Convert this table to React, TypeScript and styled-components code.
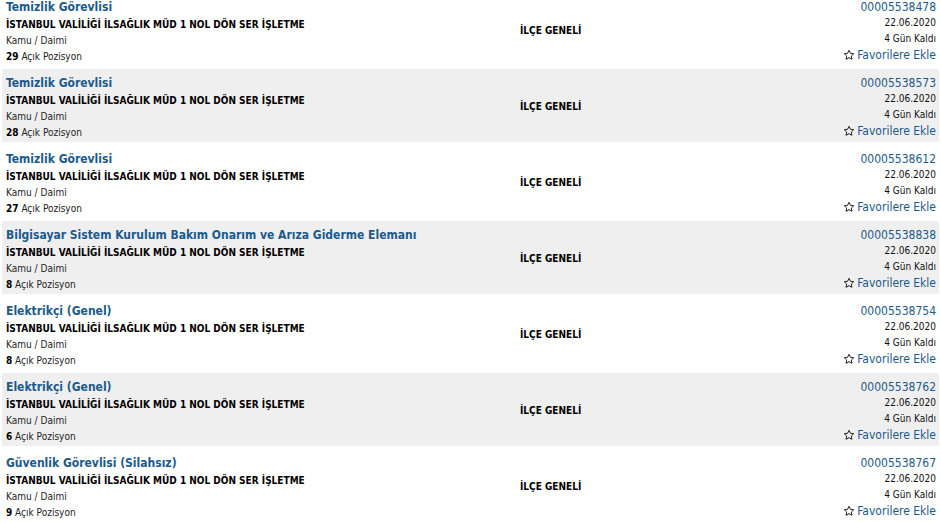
import React from "react";
import styled, { createGlobalStyle } from "styled-components";

interface Ilan {
  title: string;
  company: string;
  kind: string;
  count: number;
  location: string;
  no: string;
  date: string;
  left: string;
}

const COMPANY = "İSTANBUL VALİLİĞİ İLSAĞLIK MÜD 1 NOL DÖN SER İŞLETME";

const ilanlar: Ilan[] = [
  { title: "Temizlik Görevlisi", count: 29, no: "00005538478" },
  { title: "Temizlik Görevlisi", count: 28, no: "00005538573" },
  { title: "Temizlik Görevlisi", count: 27, no: "00005538612" },
  { title: "Bilgisayar Sistem Kurulum Bakım Onarım ve Arıza Giderme Elemanı", count: 8, no: "00005538838" },
  { title: "Elektrikçi (Genel)", count: 8, no: "00005538754" },
  { title: "Elektrikçi (Genel)", count: 6, no: "00005538762" },
  { title: "Güvenlik Görevlisi (Silahsız)", count: 9, no: "00005538767" },
].map((i) => ({
  ...i,
  company: COMPANY,
  kind: "Kamu / Daimi",
  location: "İLÇE GENELİ",
  date: "22.06.2020",
  left: "4 Gün Kaldı",
}));

const GlobalStyle = createGlobalStyle`
  html, body {
    margin: 0;
    padding: 0;
    background: #ffffff;
    overflow: hidden;
  }
  body {
    font-family: "DejaVu Sans Condensed", "DejaVu Sans", sans-serif;
    color: #111;
  }
`;

const List = styled.div`
  margin: -7px 2px 0 2px;
`;

const Row = styled.div<{ $alt: boolean }>`
  display: grid;
  grid-template-columns: 514px 1fr auto;
  height: 73px;
  margin-bottom: 3px;
  padding: 0 3px 0 4px;
  box-sizing: border-box;
  background: ${(p) => (p.$alt ? "#efefef" : "#ffffff")};
`;

const MainCol = styled.div`
  padding-top: 4px;
  display: flex;
  flex-direction: column;
  white-space: nowrap;
`;

const Title = styled.a`
  font-size: 12px;
  font-weight: bold;
  line-height: 20px;
  color: #1b5a8c;
  text-decoration: none;
`;

const Company = styled.div`
  font-size: 10px;
  font-weight: bold;
  line-height: 16px;
  color: #000;
`;

const Small = styled.div`
  font-size: 10px;
  line-height: 16px;
  color: #222;

  b {
    color: #000;
  }
`;

const Location = styled.div`
  display: flex;
  align-items: center;
  font-size: 10px;
  font-weight: bold;
  color: #000;
  padding-top: 2px;
`;

const SideCol = styled.div`
  padding-top: 6px;
  display: flex;
  flex-direction: column;
  align-items: flex-end;
  white-space: nowrap;
`;

const IlanNo = styled.a`
  font-size: 12px;
  line-height: 16px;
  color: #1b5a8c;
  text-decoration: none;
`;

const Meta = styled.div`
  font-size: 10px;
  line-height: 16px;
  color: #111;
`;

const Fav = styled.a`
  display: flex;
  align-items: center;
  gap: 2px;
  font-size: 12px;
  line-height: 16px;
  color: #1b5a8c;
  text-decoration: none;
`;

function Star() {
  return (
    <svg width="12" height="12" viewBox="0 0 24 24" fill="none" stroke="#222" strokeWidth="2" strokeLinejoin="round">
      <path d="M12 2.5l2.9 6.1 6.6.8-4.9 4.6 1.3 6.6L12 17.3l-5.9 3.3 1.3-6.6-4.9-4.6 6.6-.8z" />
    </svg>
  );
}

function App() {
  return (
    <>
      <GlobalStyle />
      <List>
        {ilanlar.map((ilan, idx) => (
          <Row key={ilan.no} $alt={idx % 2 === 1}>
            <MainCol>
              <Title href="#">{ilan.title}</Title>
              <Company>{ilan.company}</Company>
              <Small>{ilan.kind}</Small>
              <Small>
                <b>{ilan.count}</b> Açık Pozisyon
              </Small>
            </MainCol>
            <Location>{ilan.location}</Location>
            <SideCol>
              <IlanNo href="#">{ilan.no}</IlanNo>
              <Meta>{ilan.date}</Meta>
              <Meta>{ilan.left}</Meta>
              <Fav href="#">
                <Star />
                Favorilere Ekle
              </Fav>
            </SideCol>
          </Row>
        ))}
      </List>
    </>
  );
}

export default App;
